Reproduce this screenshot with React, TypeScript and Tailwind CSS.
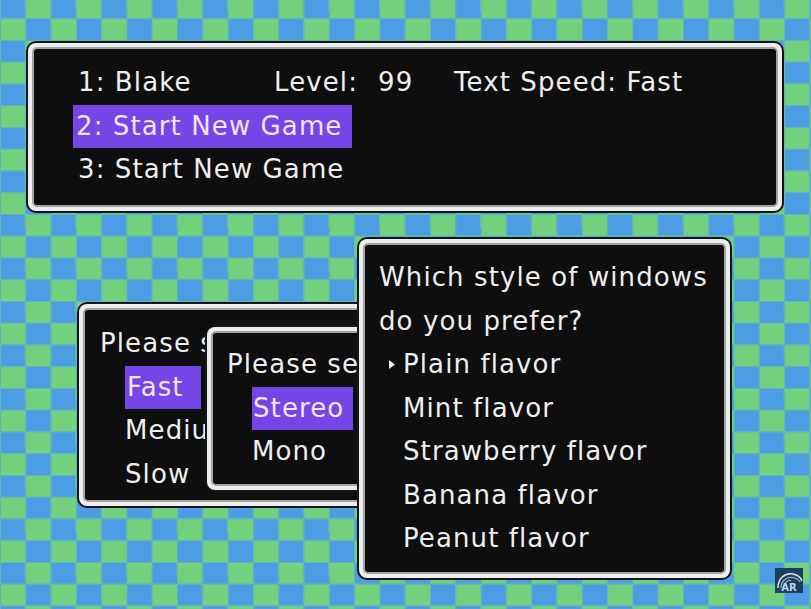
import type { ReactNode } from 'react'

// Window frame: dark rim, white band, thin grey inner line, black body
function GameWindow({ className, children }: { className: string; children: ReactNode }) {
  return (
    <div className={`absolute rounded-[10px] bg-[#15161c] p-[2px] ${className}`}>
      <div className="h-full rounded-[8px] bg-[#ededed] p-[4px]">
        <div className="h-full overflow-hidden rounded-[5px] border-2 border-[#a3a3a3] bg-[#0e0e0e]">
          {children}
        </div>
      </div>
    </div>
  )
}

function Row({ children, className = '' }: { children: ReactNode; className?: string }) {
  return <div className={`flex h-[43.5px] items-center whitespace-nowrap leading-[43.5px] ${className}`}>{children}</div>
}

// Purple selection bar
function Selected({ children, className }: { children: ReactNode; className: string }) {
  return <div className={`h-[43.5px] whitespace-nowrap bg-[#7446e6] text-[#f5e2ff] ${className}`}>{children}</div>
}

const flavors = ['Plain flavor', 'Mint flavor', 'Strawberry flavor', 'Banana flavor', 'Peanut flavor']

export default function App() {
  return (
    <div className="relative h-[609px] w-[811px] overflow-hidden bg-[#4d9de4] bg-[image:linear-gradient(90deg,#5fb7b6_1px,transparent_1px),linear-gradient(#5fb7b6_1px,transparent_1px),repeating-conic-gradient(#73d07d_0%_25%,#4d9de4_0%_50%)] bg-size-[25.3px_21.75px,25.3px_21.75px,50.6px_43.5px] bg-position-[0px_-3.5px,0px_-3.5px,0px_-3.5px] font-['DejaVu_Sans',sans-serif] text-[26px] tracking-[1.1px] text-[#efefef]">
      {/* File select */}
      <GameWindow className="left-[26px] top-[41px] h-[172px] w-[758px]">
        <div className="flex flex-col pl-[44px] pt-[12px]">
          <Row>
            <span className="w-[196px]">1: Blake</span>
            <span className="w-[104px]">Level:</span>
            <span className="w-[76px]">99</span>
            <span>Text Speed: Fast</span>
          </Row>
          <Selected className="-ml-[5px] w-[279px] pl-[3px] leading-[43.5px]">2: Start New Game</Selected>
          <Row>3: Start New Game</Row>
        </div>
      </GameWindow>

      {/* Text speed */}
      <GameWindow className="left-[77px] top-[302px] h-[206px] w-[343px]">
        <div className="flex flex-col pl-[15px] pt-[12px]">
          <Row>Please select text speed.</Row>
          <Selected className="ml-[25px] w-[76px] pl-[2px] leading-[43.5px]">Fast</Selected>
          <Row className="ml-[25px]">Medium</Row>
          <Row className="ml-[25px]">Slow</Row>
        </div>
      </GameWindow>

      {/* Sound setting */}
      <GameWindow className="left-[205px] top-[325px] h-[167px] w-[215px]">
        <div className="flex flex-col pl-[14px] pt-[10px]">
          <Row>Please select sound setting.</Row>
          <Selected className="ml-[25px] w-[101px] pl-[1px] leading-[43.5px]">Stereo</Selected>
          <Row className="ml-[25px]">Mono</Row>
        </div>
      </GameWindow>

      {/* Window flavor */}
      <GameWindow className="left-[357px] top-[237px] h-[343px] w-[375px]">
        <div className="flex flex-col pl-[14px] pt-[11px]">
          <Row>Which style of windows</Row>
          <Row>do you prefer?</Row>
          {flavors.map((f, i) => (
            <Row key={f}>
              <span className="flex w-[24px] items-center pl-[10px]">
                {i === 0 && (
                  <svg width="6" height="9" viewBox="0 0 6 9">
                    <polygon points="0,0 6,4.5 0,9" fill="#efefef" />
                  </svg>
                )}
              </span>
              <span>{f}</span>
            </Row>
          ))}
        </div>
      </GameWindow>

      {/* emulator badge */}
      <div className="absolute left-[775px] top-[568px] flex h-[25px] w-[28px] flex-col items-center justify-end overflow-hidden bg-[#1b3f5c]">
        <svg className="absolute left-0 top-0" width="28" height="25" viewBox="0 0 28 25">
          <path d="M3 20 C3 10 10 5 18 6 C23 7 26 10 27 13" stroke="#d8e4ee" strokeWidth="1.5" fill="none" />
          <path d="M6 20 C6 13 11 9 17 9.5 C21 10 24 12 25 14" stroke="#9fb8cc" strokeWidth="1.2" fill="none" />
          <path d="M9 19 C9 15 12 12 16 12.5" stroke="#c8d6e2" strokeWidth="1" fill="none" />
        </svg>
        <span className="relative font-['DejaVu_Sans',sans-serif] text-[10px] font-bold leading-[11px] tracking-normal text-[#bcd6ec]">AR</span>
      </div>
    </div>
  )
}
